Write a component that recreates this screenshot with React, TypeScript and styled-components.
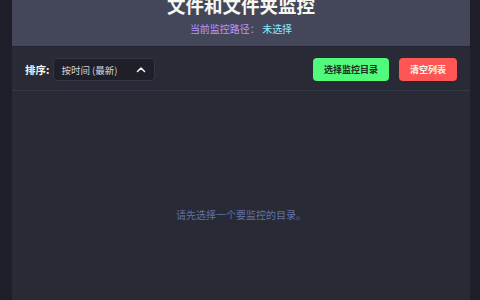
import React, { useState } from "react";
import styled, { createGlobalStyle } from "styled-components";

const GlobalStyle = createGlobalStyle`
	html, body {
		margin: 0;
		padding: 0;
		background: #1f1f2b;
		height: 100%;
		overflow: hidden;
	}
	body {
		font-family: "Noto Sans CJK SC", "Noto Sans", sans-serif;
	}
`;

const Page = styled.div`
	height: 300px;
	padding: 0 10px 0 12px;
	box-sizing: border-box;
`;

const Panel = styled.div`
	height: 100%;
	background: #282a36;
	display: flex;
	flex-direction: column;
`;

const Header = styled.header`
	background: #44475a;
	border-bottom: 1px solid #23242f;
	display: flex;
	flex-direction: column;
	align-items: center;
	height: 47px;
	box-sizing: border-box;
	overflow: hidden;
`;

const Title = styled.h1`
	margin: -7px 0 0;
	font-size: 18.5px;
	line-height: 24px;
	font-weight: 700;
	color: #f8f8f2;
`;

const PathLine = styled.p`
	margin: 5px 0 0;
	font-size: 10px;
	line-height: 14px;
	color: #bd93f9;
`;

const PathValue = styled.span`
	color: #8be9fd;
`;

const Toolbar = styled.div`
	display: flex;
	align-items: center;
	justify-content: space-between;
	padding: 11px 13px 9px 13px;
	border-bottom: 1px solid #363846;
`;

const SortGroup = styled.div`
	display: flex;
	align-items: center;
	gap: 4px;
`;

const SortLabel = styled.label`
	font-size: 10.5px;
	font-weight: 700;
	color: #f8f8f2;
`;

const Select = styled.button`
	width: 102px;
	height: 23px;
	box-sizing: border-box;
	background: #1e1f29;
	border: 1px solid #343643;
	border-radius: 4px;
	display: flex;
	align-items: center;
	justify-content: space-between;
	padding: 0 8px 0 7px;
	font-family: inherit;
	font-size: 9.5px;
	color: #d4d4dc;
	cursor: pointer;
`;

const Actions = styled.div`
	display: flex;
	gap: 10px;
`;

const ActionButton = styled.button<{ $tone: "green" | "red" }>`
	height: 23px;
	padding: 0 11px;
	border: none;
	border-radius: 4px;
	font-family: inherit;
	font-size: 9px;
	font-weight: 700;
	cursor: pointer;
	background: ${({ $tone }) => ($tone === "green" ? "#50fa7b" : "#ff5555")};
	color: ${({ $tone }) => ($tone === "green" ? "#1e2a22" : "#f8f8f2")};
`;

const Empty = styled.div`
	flex: 1;
	display: flex;
	justify-content: center;
	padding-top: 117px;
	font-size: 10px;
	line-height: 14px;
	color: #6272a4;
`;

const Chevron = () => (
	<svg width="10" height="7" viewBox="0 0 10 7" fill="none">
		<path d="M1.5 5.5 L5 2 L8.5 5.5" stroke="#f0f0f0" strokeWidth="1.6" strokeLinecap="round" strokeLinejoin="round" />
	</svg>
);

export default function App() {
	const [newestFirst, setNewestFirst] = useState(true);

	return (
		<>
			<GlobalStyle />
			<Page>
				<Panel>
					<Header>
						<Title>文件和文件夹监控</Title>
						<PathLine>
							当前监控路径： <PathValue>未选择</PathValue>
						</PathLine>
					</Header>
					<Toolbar>
						<SortGroup>
							<SortLabel>排序:</SortLabel>
							<Select onClick={() => setNewestFirst((v) => !v)}>
								<span>{newestFirst ? "按时间 (最新)" : "按时间 (最早)"}</span>
								<Chevron />
							</Select>
						</SortGroup>
						<Actions>
							<ActionButton $tone="green">选择监控目录</ActionButton>
							<ActionButton $tone="red">清空列表</ActionButton>
						</Actions>
					</Toolbar>
					<Empty>请先选择一个要监控的目录。</Empty>
				</Panel>
			</Page>
		</>
	);
}
